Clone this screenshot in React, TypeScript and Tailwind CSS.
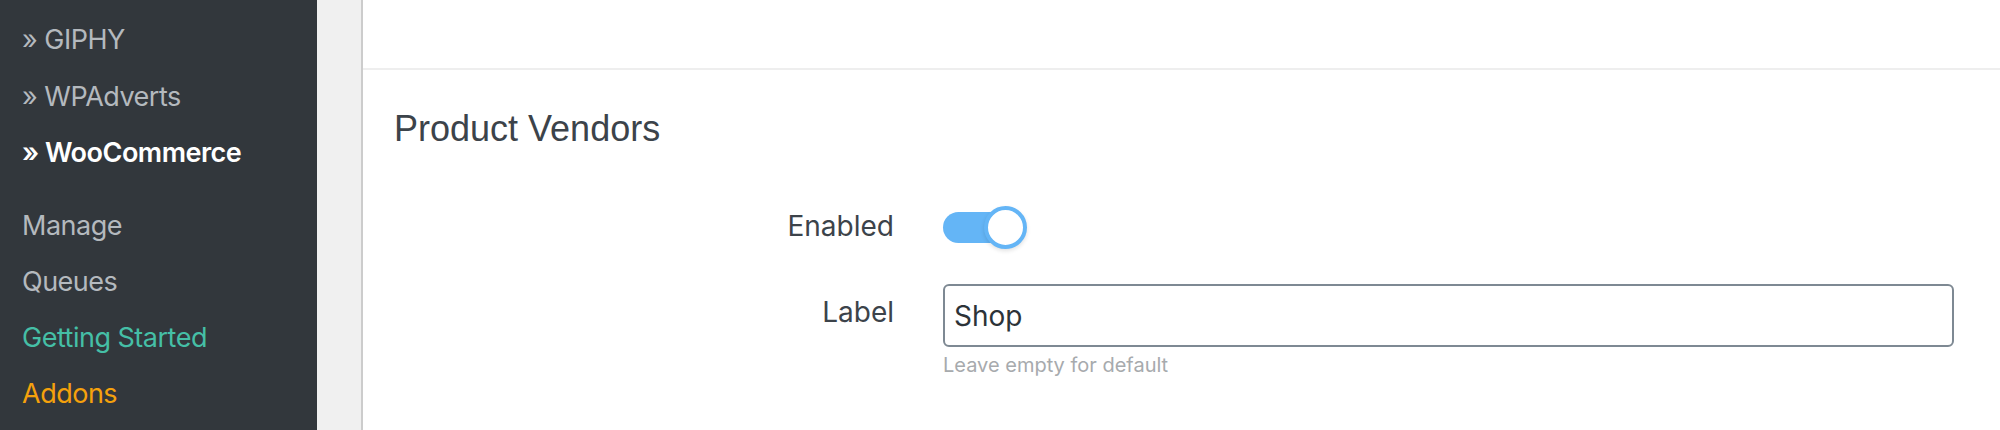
import React from "react"

const TOP_LINKS = [
  { text: "» GIPHY", cls: "text-[#b4b9be] font-normal" },
  { text: "» WPAdverts", cls: "text-[#b4b9be] font-normal" },
  { text: "» WooCommerce", cls: "text-white font-semibold" },
]

const MENU = [
  { text: "Manage", cls: "text-[#b4b9be]" },
  { text: "Queues", cls: "text-[#b4b9be]" },
  { text: "Getting Started", cls: "text-[#45bfa6]" },
  { text: "Addons", cls: "text-[#f5a10c]" },
]

function Toggle() {
  return (
    <div className="relative w-[84px] h-[43px]">
      <div className="absolute left-0 top-[6px] w-[76px] h-[31px] rounded-full bg-[#64b5f6]" />
      <div className="absolute right-0 top-0 w-[43px] h-[43px] rounded-full bg-white border-[4px] border-[#64b5f6] shadow-[0_2px_4px_rgba(0,0,0,0.12)]" />
    </div>
  )
}

export default function App() {
  return (
    <div className="flex w-[2000px] h-[430px] overflow-hidden bg-white font-['Inter',sans-serif]">
      {/* Admin sidebar */}
      <aside className="w-[317px] shrink-0 bg-[#32373c] pt-[12px] pl-[22px] text-[27px] tracking-[-0.5px]">
        {TOP_LINKS.map((l, i) => (
          <div key={i} className={`h-[56.5px] leading-[56px] whitespace-nowrap ${l.cls}`}>
            {l.text}
          </div>
        ))}
        <div className="mt-[16px]">
          {MENU.map((m, i) => (
            <div key={i} className={`h-[56px] leading-[56px] whitespace-nowrap ${m.cls}`}>
              {m.text}
            </div>
          ))}
        </div>
      </aside>

      <div className="w-[44px] shrink-0 bg-[#f0f0f0]" />

      {/* Settings panel */}
      <main className="flex-1 border-l-2 border-[#cccccc] bg-white">
        <div className="h-[70px] border-b-2 border-[#eeeeee]" />

        <section className="pl-[31px] pr-[46px]">
          <h2 className="mt-[37px] text-[36px] leading-[44px] text-[#3c434a] font-['Liberation_Sans',Arial,sans-serif]">
            Product Vendors
          </h2>

          <div className="mt-[55px] flex flex-col gap-[35px]">
            <div className="flex gap-[49px]">
              <div className="w-[500px] shrink-0 text-right text-[28px] leading-[40px] text-[#3c434a]">Enabled</div>
              <Toggle />
            </div>

            <div className="flex gap-[49px]">
              <div className="w-[500px] shrink-0 text-right text-[28px] leading-[56px] text-[#3c434a]">Label</div>
              <div className="flex-1">
                <input
                  type="text"
                  defaultValue="Shop"
                  className="w-full h-[63px] px-[9px] rounded-[6px] border-2 border-[#7e8993] text-[28px] text-[#2c3338] bg-white outline-none"
                />
                <div className="mt-[3px] text-[20px] text-[#a7aaad]">Leave empty for default</div>
              </div>
            </div>
          </div>
        </section>
      </main>
    </div>
  )
}
